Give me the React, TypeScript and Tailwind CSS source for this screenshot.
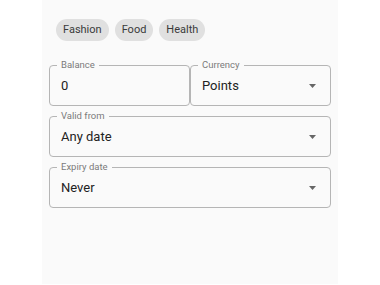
import { ReactNode } from "react";

function Chip({ label }: { label: string }) {
  return (
    <span className="h-[22px] px-[7px] flex items-center rounded-full bg-[#e0e0e0] text-[11px] text-[#3a3a3a]">
      {label}
    </span>
  );
}

function Caret() {
  return (
    <svg width="7" height="4" viewBox="0 0 7 4" className="shrink-0">
      <path d="M0 0 L7 0 L3.5 4 Z" fill="#666" />
    </svg>
  );
}

interface FieldProps {
  label: string;
  value: string;
  select?: boolean;
  className?: string;
}

function Field({ label, value, select, className }: FieldProps): ReactNode {
  return (
    <div
      className={`relative h-[41px] border border-[#b5b5b5] rounded-[4px] flex items-center pl-[11px] pr-[14px] ${className ?? ""}`}
    >
      <span className="absolute -top-[7px] left-[7px] px-[4px] bg-[#fafafa] text-[9.5px] leading-[12px] text-[#7a7a7a]">
        {label}
      </span>
      <span className="flex-1 text-[13px] text-[#222] pt-[1px]">{value}</span>
      {select && <Caret />}
    </div>
  );
}

export default function App() {
  return (
    <div className="w-[380px] h-[285px] bg-white" style={{ fontFamily: "Roboto, 'Liberation Sans', sans-serif" }}>
      <div className="ml-[42px] w-[296px] h-[284px] bg-[#fafafa] px-[7px] pt-[19px]">
        <div className="flex gap-[6px] pl-[7px]">
          <Chip label="Fashion" />
          <Chip label="Food" />
          <Chip label="Health" />
        </div>

        <div className="mt-[24px] flex flex-col gap-[10px] w-[282px]">
          <div className="flex">
            <Field label="Balance" value="0" className="w-[141px]" />
            <Field label="Currency" value="Points" select className="w-[141px]" />
          </div>
          <Field label="Valid from" value="Any date" select />
          <Field label="Expiry date" value="Never" select />
        </div>
      </div>
    </div>
  );
}
